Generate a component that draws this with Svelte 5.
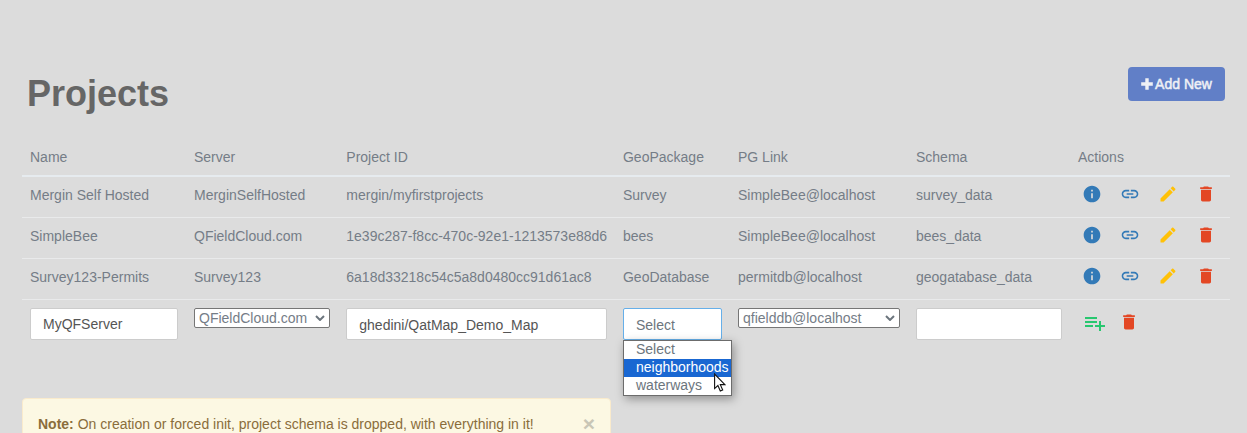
<script>
  const heads = ['Name', 'Server', 'Project ID', 'GeoPackage', 'PG Link', 'Schema', 'Actions'];
  const rows = [
    ['Mergin Self Hosted', 'MerginSelfHosted', 'mergin/myfirstprojects', 'Survey', 'SimpleBee@localhost', 'survey_data'],
    ['SimpleBee', 'QFieldCloud.com', '1e39c287-f8cc-470c-92e1-1213573e88d6', 'bees', 'SimpleBee@localhost', 'bees_data'],
    ['Survey123-Permits', 'Survey123', '6a18d33218c54c5a8d0480cc91d61ac8', 'GeoDatabase', 'permitdb@localhost', 'geogatabase_data']
  ];
</script>

{#snippet trash()}
  <svg class="icon" viewBox="0 0 24 24" fill="#e34724"><path d="M6 19c0 1.1.9 2 2 2h8c1.1 0 2-.9 2-2V7H6v12zM19 4h-3.500l-1-1h-5l-1 1H5v2h14V4z" /></svg>
{/snippet}

{#snippet chevron()}
  <svg class="chevron" viewBox="0 0 10 6"><path d="M1 1l4 4 4-4" fill="none" stroke="#6c757d" stroke-width="2" /></svg>
{/snippet}

<main>
  <header>
    <h1>Projects</h1>
    <button class="add">
      <svg viewBox="0 0 12 12"><path d="M4.300 0.200h3.400v4.100h4.100v3.400H7.700v4.100H4.300V7.700H0.200V4.300h4.100z" fill="currentColor" /></svg>
      <span>Add New</span>
    </button>
  </header>

  <section class="table">
    <div class="row head">
      {#each heads as h}<div>{h}</div>{/each}
    </div>
    {#each rows as r}
      <div class="row">
        {#each r as c}<div>{c}</div>{/each}
        <div class="actions">
          <svg class="icon" viewBox="0 0 24 24" fill="#337ab7"><path d="M12 2C6.480 2 2 6.480 2 12s4.480 10 10 10 10-4.480 10-10S17.520 2 12 2zm1 15h-2v-6h2v6zm0-8h-2V7h2v2z" /></svg>
          <svg class="icon" viewBox="0 0 24 24" fill="#337ab7"><path d="M3.900 12c0-1.710 1.390-3.100 3.100-3.100h4V7H7c-2.760 0-5 2.240-5 5s2.240 5 5 5h4v-1.900H7c-1.710 0-3.100-1.390-3.100-3.100zM8 13h8v-2H8v2zm9-6h-4v1.900h4c1.710 0 3.100 1.390 3.100 3.100s-1.390 3.100-3.100 3.100h-4V17h4c2.760 0 5-2.240 5-5s-2.240-5-5-5z" /></svg>
          <svg class="icon" viewBox="0 0 24 24" fill="#ffc107"><path d="M3 17.250V21h3.750L17.810 9.940l-3.750-3.750L3 17.250zM20.710 7.040c.39-.39.39-1.020 0-1.410l-2.340-2.340c-.39-.39-1.020-.39-1.410 0l-1.830 1.830 3.750 3.750 1.830-1.830z" /></svg>
          {@render trash()}
        </div>
      </div>
    {/each}
    <div class="row edit">
      <div><input class="up" value="MyQFServer" /></div>
      <div><div class="select">QFieldCloud.com {@render chevron()}</div></div>
      <div><input value="ghedini/QatMap_Demo_Map" /></div>
      <div class="combo">
        <div class="picker">Select</div>
        <div class="menu">
          <div>Select</div>
          <div class="active">neighborhoods</div>
          <div>waterways</div>
          <svg class="cursor" viewBox="0 0 12 19"><path d="M0.600 1v14.600l3.300-3.100 2.400 5.500 2.400-1-2.400-5.400h4.600z" fill="#fff" stroke="#111" stroke-width="1.100" /></svg>
        </div>
      </div>
      <div><div class="select">qfielddb@localhost {@render chevron()}</div></div>
      <div><input value="" /></div>
      <div class="actions">
        <svg class="icon add-list" viewBox="0 0 24 24" fill="#28c76f"><path d="M14 10H2v2h12v-2zm0-4H2v2h12V6zm4 8v-4h-2v4h-4v2h4v4h2v-4h4v-2h-4zM2 16h8v-2H2v2z" /></svg>
        {@render trash()}
      </div>
    </div>
  </section>

  <aside>
    <p><b>Note:</b> On creation or forced init, project schema is dropped, with everything in it!</p>
    <span class="close">×</span>
  </aside>
</main>

<style>
  :global(body) { background: #dcdcdc; overflow: hidden; }
  main {
    box-sizing: border-box;
    height: 433px;
    overflow: hidden;
    padding: 67px 17px 0 22px;
    font: 14px/20px "Liberation Sans", Arial, sans-serif;
    color: #757d87;
  }
  header { display: flex; justify-content: space-between; height: 72px; padding: 0 5px; }
  h1 { margin: 7px 0 0; font-size: 36px; line-height: 40px; color: #666; }
  .add {
    display: flex; align-items: center; justify-content: center; gap: 2px;
    width: 97px; height: 34px; padding: 0; border: 0; border-radius: 4px;
    background: #617fc7; color: #eef0f5;
    font: 14px/20px "Liberation Sans", Arial, sans-serif;
    -webkit-text-stroke: 0.5px #eef0f5;
  }
  .add svg { width: 12px; height: 12px; }
  .row {
    display: grid;
    box-sizing: border-box;
    grid-template-columns: 164px 152.300px 276.700px 115px 178px 162px 160px;
    height: 41px;
    padding-top: 8px;
    border-bottom: 1px solid #e9eaeb;
  }
  .row > div { padding: 0 8px; white-space: nowrap; min-width: 0; }
  .head { height: 38px; border-bottom: 2px solid #e6ebef; }
  .edit { height: 98px; border: 0; }
  .row > .actions { display: flex; gap: 18px; padding-left: 12px; }
  .icon { display: block; width: 20px; height: 20px; flex: none; margin-top: -1px; }
  .row.edit > .actions { padding: 5px 0 0 13px; gap: 12px; }
  .add-list { width: 24px; height: 24px; margin-top: -2px; }
  input, .picker {
    display: block; box-sizing: border-box; width: 100%; height: 32px;
    padding: 2px 12px 0; border: 1px solid #ccc; border-radius: 2px;
    background: #fff; color: #555; outline: 0;
    font: 14px/20px "Liberation Sans", Arial, sans-serif;
  }
  .up { padding: 0 12px; }
  .picker { padding: 6px 12px; border-color: #66afe9; color: #6c757d; }
  .combo { position: relative; }
  .menu {
    position: absolute; left: 8px; top: 32px; z-index: 1;
    box-sizing: border-box; width: 109px; height: 56px;
    border: 1px solid #6c6c6c; background: #fff; color: #6c757d;
    box-shadow: 2px 3px 9px rgba(0, 0, 0, 0.35);
  }
  .menu div { height: 18px; line-height: 16px; padding-left: 12px; }
  .menu .active { background: #1967d2; color: #fff; }
  .cursor { position: absolute; left: 90px; top: 32px; width: 12px; height: 19px; }
  .select {
    display: flex; box-sizing: border-box; align-items: center; justify-content: space-between;
    height: 20px; padding: 0 4px; border: 1px solid #767676; border-radius: 2px;
    background: #fff; color: #757d87; line-height: 18px;
  }
  .chevron { width: 10px; height: 6px; }
  aside {
    display: flex; justify-content: space-between; box-sizing: border-box;
    width: 589px; height: 52px; padding: 15px; border: 1px solid #faebcc; border-radius: 4px;
    background: #fcf8e3; color: #8a6d3b;
  }
  p { margin: 0; }
  .close { font-size: 21px; font-weight: bold; line-height: 20px; color: #c9c6b6; }
</style>
